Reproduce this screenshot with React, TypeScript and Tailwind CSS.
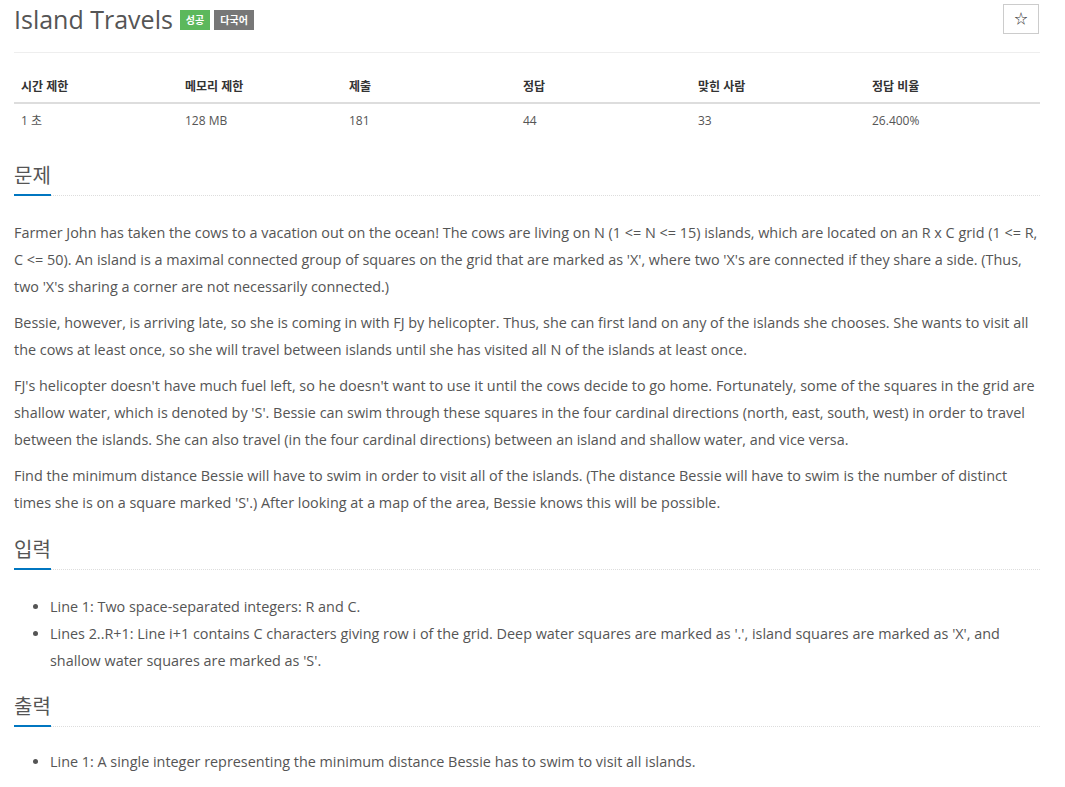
import React from 'react';

// 문제 정보 표의 열
const stats = [
  { label: '시간 제한', value: '1 초', width: 'w-[164px]' },
  { label: '메모리 제한', value: '128 MB', width: 'w-[164px]' },
  { label: '제출', value: '181', width: 'w-[174px]' },
  { label: '정답', value: '44', width: 'w-[175px]' },
  { label: '맞힌 사람', value: '33', width: 'w-[174px]' },
  { label: '정답 비율', value: '26.400%', width: '' },
];

const font = { fontFamily: '"Open Sans", "Noto Sans CJK KR", sans-serif' };

const SectionTitle: React.FC<{ title: string }> = ({ title }) => (
  <div className="border-b border-dotted border-[#ddd] mb-[23px]">
    <h2 className="inline-block border-b-2 border-[#0076c0] -mb-px text-[20px] leading-[30px] pb-[3px] text-[#555] font-normal">
      {title}
    </h2>
  </div>
);

const App: React.FC = () => {
  return (
    <div className="bg-white min-h-screen text-[#555]" style={font}>
      <div className="w-[1026px] ml-[14px]">
        {/* 제목 */}
        <div className="flex items-start justify-between pt-[4px] pb-[18px] border-b border-[#eee]">
          <div className="flex items-center gap-[7px]">
            <h1 className="text-[25px] leading-[30px] font-normal text-[#555]">Island Travels</h1>
            <span className="bg-[#5cb85c] text-white text-[10px] font-bold px-[6px] leading-[20px] mt-[2px]">성공</span>
            <span className="bg-[#777] text-white text-[10px] font-bold px-[6px] leading-[20px] mt-[2px] -ml-[3px]">다국어</span>
          </div>
          <button className="w-[36px] h-[30px] border border-[#ccc] bg-white flex items-center justify-center mr-px text-[13px] text-[#333]">
            ☆
          </button>
        </div>

        {/* 정보 표 */}
        <table className="w-full table-fixed mt-[17px] text-[12px] border-collapse">
          <thead>
            <tr className="border-b-2 border-[#ddd]">
              {stats.map((s, i) => (
                <th key={i} className={`${s.width} text-left font-bold text-[#333] px-[7px] pt-[8px] pb-[6px] leading-[18px]`}>{s.label}</th>
              ))}
            </tr>
          </thead>
          <tbody>
            <tr>
              {stats.map((s, i) => (
                <td key={i} className="text-left px-[7px] pt-[8px] pb-[8px] leading-[18px] text-[#555]">{s.value}</td>
              ))}
            </tr>
          </tbody>
        </table>

        {/* 문제 */}
        <div className="mt-[23px]">
          <SectionTitle title="문제" />
          <div className="text-[14.4px] leading-[27px]">
            <p className="mb-[9px]">Farmer John has taken the cows to a vacation out on the ocean! The cows are living on N (1 &lt;= N &lt;= 15) islands, which are located on an R x C grid (1 &lt;= R, C &lt;= 50). An island is a maximal connected group of squares on the grid that are marked as 'X', where two 'X's are connected if they share a side. (Thus, two 'X's sharing a corner are not necessarily connected.)</p>
            <p className="mb-[9px]">Bessie, however, is arriving late, so she is coming in with FJ by helicopter. Thus, she can first land on any of the islands she chooses. She wants to visit all the cows at least once, so she will travel between islands until she has visited all N of the islands at least once.</p>
            <p className="mb-[9px]">FJ's helicopter doesn't have much fuel left, so he doesn't want to use it until the cows decide to go home. Fortunately, some of the squares in the grid are shallow water, which is denoted by 'S'. Bessie can swim through these squares in the four cardinal directions (north, east, south, west) in order to travel between the islands. She can also travel (in the four cardinal directions) between an island and shallow water, and vice versa.</p>
            <p className="mb-[9px]">Find the minimum distance Bessie will have to swim in order to visit all of the islands. (The distance Bessie will have to swim is the number of distinct times she is on a square marked 'S'.) After looking at a map of the area, Bessie knows this will be possible.</p>
          </div>
        </div>

        {/* 입력 */}
        <div className="mt-[19px]">
          <SectionTitle title="입력" />
          <ul className="list-disc pl-[36px] text-[14.4px] leading-[27px] mb-[9px]">
            <li>Line 1: Two space-separated integers: R and C.</li>
            <li>Lines 2..R+1: Line i+1 contains C characters giving row i of the grid. Deep water squares are marked as '.', island squares are marked as 'X', and shallow water squares are marked as 'S'.</li>
          </ul>
        </div>

        {/* 출력 */}
        <div className="mt-[18px]">
          <SectionTitle title="출력" />
          <ul className="list-disc pl-[36px] text-[14.4px] leading-[27px] -mt-[2px]">
            <li>Line 1: A single integer representing the minimum distance Bessie has to swim to visit all islands.</li>
          </ul>
        </div>
      </div>
    </div>
  );
};

export default App;
